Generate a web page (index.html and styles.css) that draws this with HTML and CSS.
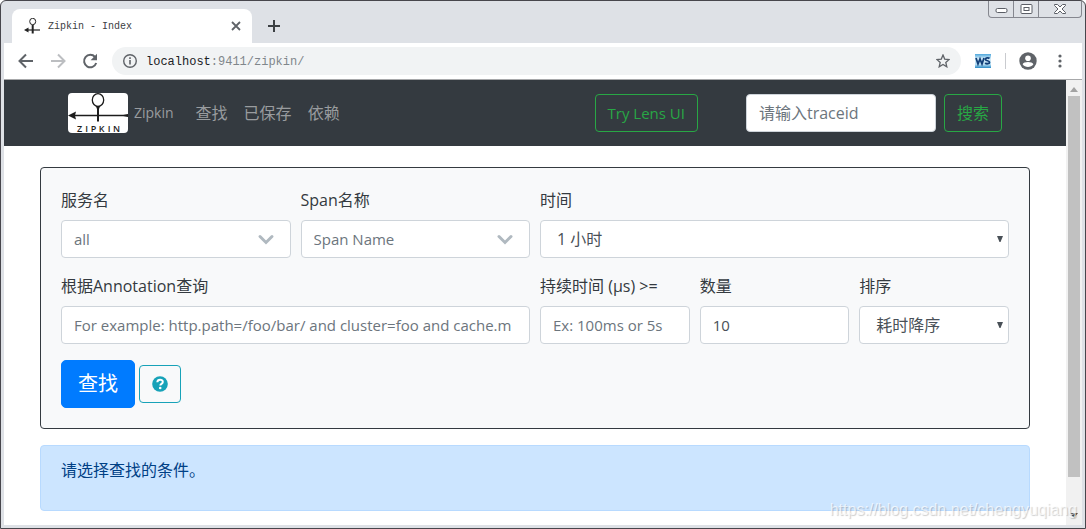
FILE: index.html
```html
<!DOCTYPE html>
<html lang="zh-CN">
<head>
<meta charset="utf-8">
<meta name="viewport" content="width=device-width, initial-scale=1">
<title>Zipkin - Index</title>
<link rel="stylesheet" href="styles.css">
</head>
<body>
<div class="window">
  <header class="tabstrip">
    <div class="tab">
      <svg class="tab-icon" width="16" height="16" viewBox="0 0 16 16" fill="none" stroke="#222">
        <ellipse cx="8.700" cy="3.500" rx="3" ry="3.200"/>
        <path d="M8.700 7v8.500" stroke-width="2"/>
        <path d="M4 12h12" stroke-width="1.200"/>
        <path d="M0 12l4.500-2.500v5z" fill="#222" stroke="none"/>
      </svg>
      <span class="tab-title">Zipkin - Index</span>
      <button class="plain" aria-label="关闭标签页">
        <svg width="10" height="10" viewBox="0 0 10 10" stroke="#5f6368" stroke-width="1.800"><path d="M1 1l8 8M9 1l-8 8"/></svg>
      </button>
    </div>
    <button class="plain new-tab" aria-label="新标签页">
      <svg width="12" height="12" viewBox="0 0 12 12" stroke="#3c4043" stroke-width="2"><path d="M6 0v12M0 6h12"/></svg>
    </button>
    <div class="window-controls">
      <button class="control" aria-label="最小化"><svg width="13" height="10" viewBox="0 0 13 10"><rect x="1" y="4.500" width="11" height="4" rx="1.500" fill="#fff" stroke="#5b5e66"/></svg></button>
      <button class="control" aria-label="最大化"><svg width="13" height="10" viewBox="0 0 13 10" fill="#fff" stroke="#5b5e66"><rect x="1" y=".5" width="11" height="9" rx="1"/><rect x="4" y="3.500" width="5" height="3"/></svg></button>
      <button class="control control-close" aria-label="关闭"><svg width="12" height="10" viewBox="0 0 12 10"><path d="M.5.5h3L6 3 8.500.5h3v1L8 5l3.500 3.500v1h-3L6 7 3.500 9.500h-3v-1L4 5 .5 1.500z" fill="#fff" stroke="#5b5e66"/></svg></button>
    </div>
  </header>

  <div class="toolbar">
    <div class="nav-buttons">
      <button class="plain" aria-label="后退"><svg width="16" height="16" viewBox="0 0 16 16" fill="none" stroke="#5f6368" stroke-width="2"><path d="M15 8H2M8 1.500L1.500 8 8 14.500"/></svg></button>
      <button class="plain" aria-label="前进"><svg width="16" height="16" viewBox="0 0 16 16" fill="none" stroke="#bcbec1" stroke-width="2"><path d="M1 8h13M8 1.500L14.500 8 8 14.500"/></svg></button>
      <button class="plain" aria-label="重新加载"><svg width="16" height="16" viewBox="0 0 16 16"><path d="M13 4a6.200 6.200 0 1 0 1.200 6" fill="none" stroke="#5f6368" stroke-width="2"/><path d="M15 .8v6.400H8.600z" fill="#5f6368"/></svg></button>
    </div>
    <div class="omnibox">
      <svg width="16" height="16" viewBox="0 0 16 16"><circle cx="8" cy="8" r="6.300" fill="none" stroke="#5f6368" stroke-width="1.400"/><path d="M7.200 7h1.600v4.500H7.200zM7.200 4.300h1.600v1.600H7.200z" fill="#5f6368"/></svg>
      <span class="url"><span class="host">localhost</span>:9411/zipkin/</span>
      <button class="plain" aria-label="收藏"><svg width="14" height="14" viewBox="0 0 14 14"><path d="M7 1l1.700 4.100 4.400.4-3.300 2.900 1 4.400L7 10.500l-3.800 2.300 1-4.400L.9 5.500l4.400-.4z" fill="none" stroke="#5f6368" stroke-width="1.300"/></svg></button>
    </div>
    <svg class="ext" width="16" height="14" viewBox="0 0 16 14"><defs><linearGradient id="sky" x2="0" y2="1"><stop offset="0" stop-color="#4fa7dc"/><stop offset=".35" stop-color="#d9effa"/><stop offset=".75" stop-color="#b4dcf2"/><stop offset="1" stop-color="#2788c4"/></linearGradient></defs><path d="M0 0h16v14H0z" fill="url(#sky)"/><path d="M1 4l2 6 2-5 2 5 2-6M14.500 4.500c-1-1-4-.8-4 .9s4 1 4 2.800-3 2-4.300.8" fill="none" stroke="#123f78" stroke-width="1.800"/></svg>
    <span class="divider"></span>
    <button class="plain profile" aria-label="用户"><svg width="18" height="18" viewBox="0 0 18 18"><circle cx="9" cy="9" r="8.700" fill="#5f6368"/><circle cx="9" cy="6.300" r="2.800" fill="#fff"/><path d="M3.600 12.300c1-3 9.800-3 10.800 0-2.400 3.700-8.400 3.700-10.800 0z" fill="#fff"/></svg></button>
    <button class="plain" aria-label="菜单"><svg width="4" height="14" viewBox="0 0 4 14" fill="#5f6368"><circle cx="2" cy="2" r="1.600"/><circle cx="2" cy="7" r="1.600"/><circle cx="2" cy="12" r="1.600"/></svg></button>
  </div>

  <div class="viewport">
    <div class="page">
      <nav class="navbar">
        <a class="brand" href="#">
          <svg class="logo" width="60" height="40" viewBox="0 0 60 40" fill="none" stroke="#1c1c1c">
            <rect width="60" height="40" rx="4" fill="#fff" stroke="none"/>
            <ellipse cx="30" cy="7" rx="5.700" ry="6.300" stroke-width="1.300"/>
            <path d="M5 22.500h55" stroke-width="1.300"/>
            <path d="M0 22.500L8 18.500 7 22.500l1 4z" fill="#1c1c1c" stroke="none"/>
            <path d="M53 22.500l7-1.500v3z" fill="#1c1c1c" stroke="none"/>
            <path d="M27.800 13h4.400l-1.200 3v12.500h-2V16z" fill="#1c1c1c" stroke="none"/>
            <g class="wordmark" fill="#1c1c1c" stroke="none" text-anchor="middle"><text x="11.500" y="39">Z</text><text x="18.500" y="39">I</text><text x="25.500" y="39">P</text><text x="33.500" y="39">K</text><text x="41" y="39">I</text><text x="48.500" y="39">N</text></g>
          </svg>
          <span>Zipkin</span>
        </a>
        <div class="links"><a href="#">查找</a><a href="#">已保存</a><a href="#">依赖</a></div>
        <button class="btn btn-green latin">Try Lens UI</button>
        <form class="trace-form">
          <input class="control-box" type="text" placeholder="请输入traceid" aria-label="traceid">
          <button class="btn btn-green" type="button">搜索</button>
        </form>
      </nav>
      <main class="content">
        <form class="card">
          <div class="field span-3">
            <label for="service">服务名</label>
            <div class="combo"><input class="control-box latin" id="service" type="text" placeholder="all"><svg class="chevron" width="18" height="12" viewBox="0 0 18 12" fill="none" stroke="#b0b9c0" stroke-width="3" stroke-linecap="round"><path d="M3 2.500l6 6 6-6"/></svg></div>
          </div>
          <div class="field span-3">
            <label for="span">Span名称</label>
            <div class="combo"><input class="control-box latin" id="span" type="text" placeholder="Span Name"><svg class="chevron" width="18" height="12" viewBox="0 0 18 12" fill="none" stroke="#b0b9c0" stroke-width="3" stroke-linecap="round"><path d="M3 2.500l6 6 6-6"/></svg></div>
          </div>
          <div class="field span-6">
            <label for="lookback">时间</label>
            <div class="combo"><select class="control-box" id="lookback"><option>1 小时</option></select><svg class="caret" width="6" height="6" viewBox="0 0 6 6"><path d="M0 0h6L3.500 6h-1z" fill="#495057"/></svg></div>
          </div>
          <div class="field span-6">
            <label for="annotation">根据Annotation查询</label>
            <input class="control-box latin" id="annotation" type="text" placeholder="For example: http.path=/foo/bar/ and cluster=foo and cache.m">
          </div>
          <div class="field span-2">
            <label for="duration">持续时间 (μs) &gt;=</label>
            <input class="control-box latin" id="duration" type="text" placeholder="Ex: 100ms or 5s">
          </div>
          <div class="field span-2">
            <label for="limit">数量</label>
            <input class="control-box latin" id="limit" type="text" value="10">
          </div>
          <div class="field span-2">
            <label for="sort">排序</label>
            <div class="combo"><select class="control-box" id="sort"><option>耗时降序</option></select><svg class="caret" width="6" height="6" viewBox="0 0 6 6"><path d="M0 0h6L3.500 6h-1z" fill="#495057"/></svg></div>
          </div>
          <div class="actions">
            <button class="btn btn-primary" type="button">查找</button>
            <button class="btn btn-info" type="button" aria-label="帮助"><svg width="16" height="16" viewBox="0 0 16 16"><circle cx="8" cy="8" r="7.800" fill="#17a2b8"/><path d="M5.300 6.200c.2-3.400 5.600-3.200 5.500-.2 0 1.900-2.500 1.900-2.500 3.500" fill="none" stroke="#fff" stroke-width="2"/><circle cx="8.200" cy="12" r="1.300" fill="#fff"/></svg></button>
          </div>
        </form>
        <div class="alert"><p>请选择查找的条件。</p></div>
      </main>
    </div>
    <div class="scrollbar" aria-hidden="true">
      <svg width="8" height="5" viewBox="0 0 8 5"><path d="M0 5l4-5 4 5z" fill="#a3a3a3"/></svg>
      <div class="thumb"></div>
      <svg width="8" height="5" viewBox="0 0 8 5"><path d="M0 0l4 5 4-5z" fill="#505050"/></svg>
    </div>
  </div>
  <div class="watermark">https://blog.csdn.net/chengyuqiang</div>
</div>
</body>
</html>
```
FILE: styles.css
```css
* { box-sizing: border-box; }
body {
  margin: 0;
  font-family: "Open Sans", "Noto Sans CJK SC", sans-serif;
  font-size: 16px;
  line-height: 24px;
  color: #343a40;
}
button, input, select { font: inherit; margin: 0; }
svg { display: block; flex: none; }
a { text-decoration: none; color: inherit; }

.window {
  position: relative;
  display: flex;
  flex-direction: column;
  min-height: 100vh;
  padding: 0 3px 3px;
  border: 1px solid #47464c;
  border-radius: 6px 6px 0 0;
  background: #dee1e6;
}
.plain {
  display: flex;
  padding: 0;
  border: 0;
  background: none;
}

.tabstrip { display: flex; height: 42px; padding-left: 8px; }
.tab {
  display: flex;
  align-items: center;
  width: 240px;
  margin-top: 8px;
  padding: 0 11px 0 12px;
  border-radius: 8px 8px 0 0;
  background: #fff;
}
.tab-title {
  flex: 1;
  margin-left: 8px;
  padding-top: 2px;
  font-family: "Liberation Mono", monospace;
  font-size: 10px;
  color: #3c4043;
}
.new-tab { align-items: center; margin: 8px 0 0 16px; }
.window-controls {
  display: flex;
  height: 17px;
  margin-left: auto;
  border: 1px solid #85878f;
  border-top: 0;
  border-radius: 0 0 4px 4px;
}
.control {
  display: flex;
  align-items: center;
  justify-content: center;
  width: 25px;
  padding: 0;
  border: 0;
  border-right: 1px solid #85878f;
  background: none;
}
.control-close { width: 42px; border-right: 0; }

.toolbar {
  display: flex;
  align-items: center;
  height: 37px;
  padding: 0 20px 0 14px;
  border-bottom: 1px solid #a7a8aa;
  background: #fff;
}
.nav-buttons { display: flex; gap: 16px; }
.omnibox {
  display: flex;
  flex: 1;
  align-items: center;
  height: 28px;
  margin: 0 14px;
  padding: 0 11px 0 10px;
  border-radius: 14px;
  background: #f1f3f4;
}
.url {
  flex: 1;
  margin-left: 8px;
  padding-top: 2px;
  font-family: "Liberation Mono", monospace;
  font-size: 12px;
  color: #80868b;
}
.host { color: #202124; }
.divider { width: 1px; height: 16px; margin: 0 13px 0 14px; background: #c9cbcf; }
.profile { margin-right: 21px; }

.viewport { display: flex; flex: 1; }
.page { flex: 1; min-width: 0; background: #fff; }
.navbar {
  display: flex;
  align-items: center;
  min-height: 66px;
  padding: 0 64px;
  background: #343a40;
  color: #999c9f;
}
.brand { display: flex; align-items: center; gap: 6px; font-size: 14px; }
.logo { overflow: visible; }
.wordmark { font: 600 9px "Open Sans", sans-serif; }
.links { display: flex; flex: 1; gap: 16px; margin-left: 22px; white-space: nowrap; }
.trace-form { display: flex; gap: 8px; margin-left: 48px; }
.trace-form .control-box { width: 190px; }

.btn {
  padding: 6px 12px;
  border: 1px solid;
  border-radius: 4px;
  background: none;
  line-height: 24px;
  white-space: nowrap;
}
.btn-green { border-color: #28a745; color: #28a745; }
.btn-primary {
  padding: 8px 16px;
  border-color: #007bff;
  border-radius: 5px;
  background: #007bff;
  font-size: 20px;
  line-height: 30px;
  color: #fff;
}
.btn-info { height: 38px; border-color: #17a2b8; }

.content { padding: 21px 36px 14px; }
.card {
  display: grid;
  grid-template-columns: repeat(12, 1fr);
  gap: 16px 10px;
  padding: 20px;
  border: 1px solid #343a40;
  border-radius: 4px;
  background: #f8f9fa;
}
.field { min-width: 0; }
.field label { display: block; margin-bottom: 8px; }
.span-2 { grid-column: span 2; }
.span-3 { grid-column: span 3; }
.span-6 { grid-column: span 6; }
.control-box {
  display: block;
  width: 100%;
  height: 38px;
  padding: 6px 12px;
  border: 1px solid #ced4da;
  border-radius: 4px;
  background: #fff;
  color: #495057;
}
.control-box::placeholder { color: #6c757d; opacity: 1; }
.latin { font-size: 15px; }
select.control-box { appearance: none; padding-left: 16px; }
.combo { position: relative; }
.chevron { position: absolute; top: 14px; right: 16px; }
.caret { position: absolute; top: 16px; right: 6px; }
.actions { display: flex; grid-column: 1 / -1; align-items: center; gap: 4px; }

.alert {
  margin-top: 16px;
  padding: 12px 20px;
  border: 1px solid #b8daff;
  border-radius: 4px;
  background: #cce5ff;
  color: #004085;
}
.alert p { margin: 0 0 16px; }

.scrollbar {
  display: flex;
  flex-direction: column;
  align-items: center;
  width: 16px;
  padding: 7px 2px;
  background: #f1f1f1;
}
.thumb { width: 12px; height: 381px; margin: 4px 0 auto; background: #c1c1c1; }
.watermark {
  position: absolute;
  right: 8px;
  bottom: 6px;
  font-family: "Liberation Sans", Arial, sans-serif;
  font-size: 16px;
  color: rgba(255, 255, 255, 0.7);
  text-shadow: 1px 1px 1px rgba(0, 0, 0, 0.2);
  pointer-events: none;
}
```
